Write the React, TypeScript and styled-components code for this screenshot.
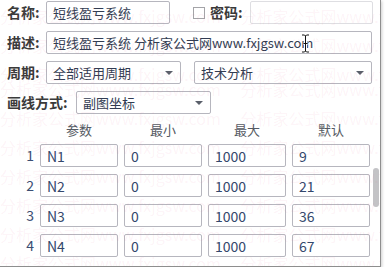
import React from 'react';
import styled, { createGlobalStyle } from 'styled-components';

const GlobalStyle = createGlobalStyle`
  html, body {
    margin: 0;
    padding: 0;
    background: #ffffff;
  }
  body {
    font-family: "Noto Sans CJK SC", "Noto Sans", sans-serif;
  }
`;

const Panel = styled.div`
  position: relative;
  width: 380px;
  height: 265px;
  background: #ffffff;
  border-right: 1px solid #8e8e8e;
  border-bottom: 1px solid #8e8e8e;
  box-shadow: 1px 1px 3px rgba(0, 0, 0, 0.2);
  overflow: hidden;
  padding-top: 1px;
  box-sizing: content-box;
`;

const FormRow = styled.div`
  display: flex;
  align-items: center;
  height: 23px;
  margin-bottom: 7px;
  padding-left: 7px;
`;

const Label = styled.label<{ $w: number; $gap?: number }>`
  flex: none;
  width: ${(p) => p.$w}px;
  margin-right: ${(p) => p.$gap ?? 0}px;
  font-size: 14px;
  font-weight: 700;
  color: #3a3a3a;
  line-height: 23px;
  white-space: nowrap;
`;

const Field = styled.div<{ $w: number; $faint?: boolean; $ml?: number }>`
  flex: none;
  box-sizing: border-box;
  width: ${(p) => p.$w}px;
  height: 23px;
  margin-left: ${(p) => p.$ml ?? 0}px;
  border: 1px solid ${(p) => (p.$faint ? '#dedee2' : '#b6b6be')};
  border-radius: 2px;
  background: #ffffff;
  padding: 0 6px;
  display: flex;
  align-items: center;
  font-size: 13px;
  color: #323c52;
  white-space: nowrap;
  overflow: hidden;
`;

const SelectBox = styled(Field)`
  justify-content: space-between;
  padding-right: 7px;
`;

const Arrow = styled.span`
  width: 0;
  height: 0;
  border-left: 4px solid transparent;
  border-right: 4px solid transparent;
  border-top: 4px solid #5a5f6a;
`;

const CheckBox = styled.span`
  flex: none;
  box-sizing: border-box;
  width: 12px;
  height: 12px;
  margin-left: 23px;
  margin-right: 5px;
  border: 1px solid #a4a4a8;
  background: #ffffff;
`;

const TableArea = styled.div`
  display: flex;
  margin-top: -7px;
`;

const Table = styled.div`
  width: 373px;
  display: grid;
  grid-template-columns: 34px repeat(4, 78px);
  column-gap: 6px;
  row-gap: 7px;
  grid-auto-rows: 23px;
  align-items: center;
`;

const Head = styled.div`
  grid-row: 1;
  height: 30px;
  margin-bottom: -7px;
  display: flex;
  align-items: center;
  justify-content: center;
  font-size: 13px;
  color: #555a63;
`;

const HeadSpacer = styled.div`
  grid-row: 1;
  height: 30px;
`;

const RowNum = styled.div`
  text-align: right;
  font-size: 14px;
  color: #3b4e72;
  line-height: 23px;
`;

const Cell = styled(Field)`
  width: 78px;
  font-size: 14px;
  color: #33476c;
`;

const ScrollTrack = styled.div`
  width: 6px;
  padding-top: 54px;
`;

const Thumb = styled.div`
  width: 6px;
  height: 39px;
  border-radius: 3px;
  background: #c3c3c6;
`;

const Watermark = styled.div`
  position: absolute;
  inset: 0;
  pointer-events: none;
  font-family: "Noto Sans CJK SC", "Liberation Sans", sans-serif;
  font-size: 16px;
  color: rgba(225, 110, 145, 0.08);
  white-space: nowrap;
`;

const MarkLine = styled.div<{ $top: number }>`
  height: 29px;
  line-height: 29px;
  margin-top: ${(p) => p.$top}px;
`;

const Cursor = styled.svg`
  position: absolute;
  left: 301px;
  top: 34px;
`;

const rows = [
  { n: 1, name: 'N1', min: '0', max: '1000', def: '9' },
  { n: 2, name: 'N2', min: '0', max: '1000', def: '21' },
  { n: 3, name: 'N3', min: '0', max: '1000', def: '36' },
  { n: 4, name: 'N4', min: '0', max: '1000', def: '67' },
];

const markText = '分析家公式网www.fxjgsw.com\u3000 分析家公式网www.fxjgsw.com';
const markTops = [2, 0, 0, -14, 0, 0, 0, 0, 0, 0];

export default function App() {
  return (
    <>
      <GlobalStyle />
      <Panel>
        <FormRow>
          <Label $w={39}>名称:</Label>
          <Field $w={124}>短线盈亏系统</Field>
          <CheckBox />
          <Label $w={32} $gap={8}>密码:</Label>
          <Field $w={123} $faint />
        </FormRow>
        <FormRow>
          <Label $w={39}>描述:</Label>
          <Field $w={326}>短线盈亏系统 分析家公式网www.fxjgsw.com</Field>
        </FormRow>
        <FormRow>
          <Label $w={39}>周期:</Label>
          <SelectBox $w={135}>
            全部适用周期
            <Arrow />
          </SelectBox>
          <SelectBox $w={178} $ml={13}>
            技术分析
            <Arrow />
          </SelectBox>
        </FormRow>
        <FormRow>
          <Label $w={69}>画线方式:</Label>
          <SelectBox $w={135}>
            副图坐标
            <Arrow />
          </SelectBox>
        </FormRow>
        <TableArea>
          <Table>
            <HeadSpacer />
            <Head>参数</Head>
            <Head>最小</Head>
            <Head>最大</Head>
            <Head>默认</Head>
            {rows.map((r) => (
              <React.Fragment key={r.n}>
                <RowNum>{r.n}</RowNum>
                <Cell $w={78}>{r.name}</Cell>
                <Cell $w={78}>{r.min}</Cell>
                <Cell $w={78}>{r.max}</Cell>
                <Cell $w={78}>{r.def}</Cell>
              </React.Fragment>
            ))}
          </Table>
          <ScrollTrack>
            <Thumb />
          </ScrollTrack>
        </TableArea>
        <Watermark aria-hidden="true">
          {markTops.map((t, i) => (
            <MarkLine key={i} $top={t}>
              {markText}
            </MarkLine>
          ))}
        </Watermark>
        <Cursor width="9" height="19" viewBox="0 0 9 19">
          <path
            d="M1 1h2.5l1 1 1-1H8M4.5 2v15M1 18h2.5l1-1 1 1H8M2.5 9.5h4"
            fill="none"
            stroke="#ffffff"
            strokeWidth="3"
          />
          <path
            d="M1 1h2.5l1 1 1-1H8M4.5 2v15M1 18h2.5l1-1 1 1H8M2.5 9.5h4"
            fill="none"
            stroke="#111111"
            strokeWidth="1"
          />
        </Cursor>
      </Panel>
    </>
  );
}
